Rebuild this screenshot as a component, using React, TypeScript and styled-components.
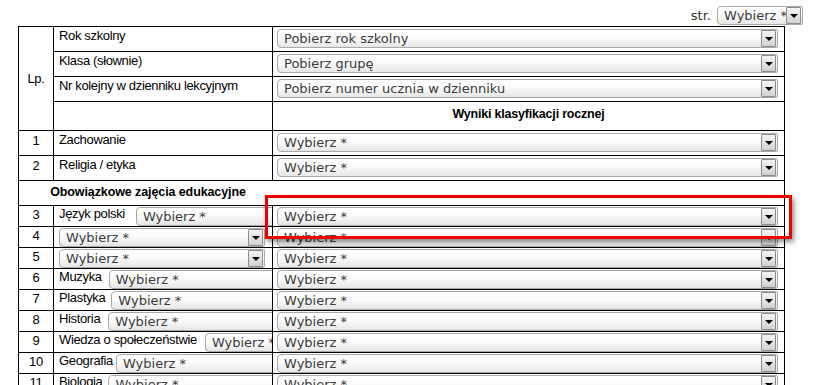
import React from 'react';
import styled, { createGlobalStyle } from 'styled-components';

const subjects = [
  { n: '3', label: 'Język polski', gap: 11 },
  { n: '4', label: '', gap: 0 },
  { n: '5', label: '', gap: 0 },
  { n: '6', label: 'Muzyka', gap: 7 },
  { n: '7', label: 'Plastyka', gap: 6 },
  { n: '8', label: 'Historia', gap: 8 },
  { n: '9', label: 'Wiedza o społeczeństwie', gap: 8 },
  { n: '10', label: 'Geografia', gap: 3 },
  { n: '11', label: 'Biologia', gap: 6 },
  { n: '12', label: 'Fizyka', gap: 6 },
  { n: '13', label: 'Chemia', gap: 6 },
];

function Dropdown({ text, width }: { text: string; width: number }) {
  return (
    <Select $w={width}>
      <SelectText>{text}</SelectText>
      <Arrow><Tri /></Arrow>
    </Select>
  );
}

export default function App() {
  return (<Page>
    <GlobalStyle/>
    <TopBar>
      <StrLabel>str.</StrLabel>
      <Dropdown text="Wybierz *" width={86}/>
    </TopBar>
    <Grid>
      <colgroup>
        <col style={{ width: 35 }}/>
        <col style={{ width: 219 }}/>
        <col style={{ width: 512 }}/>
      </colgroup>
      <tbody>
        <Row $h={25}>
          <NumCell rowSpan={4} $mid>Lp.</NumCell>
          <LabelCell>Rok szkolny</LabelCell>
          <SelCell><Dropdown text="Pobierz rok szkolny" width={501}/></SelCell>
        </Row>
        <Row $h={25}>
          <LabelCell>Klasa (słownie)</LabelCell>
          <SelCell><Dropdown text="Pobierz grupę" width={501}/></SelCell>
        </Row>
        <Row $h={25}>
          <LabelCell>Nr kolejny w dzienniku lekcyjnym</LabelCell>
          <SelCell><Dropdown text="Pobierz numer ucznia w dzienniku" width={501}/></SelCell>
        </Row>
        <Row $h={29}>
          <LabelCell/>
          <HeadCell>Wyniki klasyfikacji rocznej</HeadCell>
        </Row>
        <Row $h={25}>
          <NumCell>1</NumCell>
          <LabelCell>Zachowanie</LabelCell>
          <SelCell><Dropdown text="Wybierz *" width={501}/></SelCell>
        </Row>
        <Row $h={25}>
          <NumCell>2</NumCell>
          <LabelCell>Religia / etyka</LabelCell>
          <SelCell><Dropdown text="Wybierz *" width={501}/></SelCell>
        </Row>
        <Row $h={25}>
          <SectionCell colSpan={3}><SectionText>Obowiązkowe zajęcia edukacyjne</SectionText></SectionCell>
        </Row>
        {subjects.map(s => (
          <Row key={s.n} $h={20}>
            <NumCell $tight>{s.n}</NumCell>
            <SubjectCell>
              <SubjectLine>
                {s.label && <SubjectName>{s.label}</SubjectName>}
                <Offset $gap={s.gap}><Dropdown text="Wybierz *" width={206}/></Offset>
              </SubjectLine>
            </SubjectCell>
            <SelCell $tight><Dropdown text="Wybierz *" width={501}/></SelCell>
          </Row>
        ))}
      </tbody>
    </Grid>
    <Highlight/>
  </Page>);
}

const GlobalStyle = createGlobalStyle`
  html, body {
    margin: 0;
    padding: 0;
    overflow: hidden;
    background: #fff;
  }
`;
const Page = styled.div`
  position: relative;
  width: 821px;
  height: 385px;
  overflow: hidden;
  font-family: "Liberation Sans", Arial, sans-serif;
  color: #000;
`;
const TopBar = styled.div`
  height: 26px;
  box-sizing: border-box;
  padding: 6px 18px 0 0;
  display: flex;
  justify-content: flex-end;
  align-items: flex-start;
  gap: 6px;
`;
const StrLabel = styled.span`
  font: 13px/19px "DejaVu Sans", Verdana, sans-serif;
  color: #333;
`;
const Grid = styled.table`
  margin-left: 18px;
  width: 766px;
  table-layout: fixed;
  border-collapse: collapse;
  font-size: 13px;
`;
const Row = styled.tr<{ $h: number }>`
  height: ${({ $h }) => $h}px;
`;
const Cell = styled.td`
  border: 1px solid #000;
  padding: 0;
  vertical-align: top;
`;
const NumCell = styled(Cell)<{ $mid?: boolean; $tight?: boolean }>`
  text-align: center;
  vertical-align: ${({ $mid }) => $mid ? 'middle' : 'top'};
  padding-top: ${({ $mid, $tight }) => $mid ? 0 : $tight ? 1 : 2}px;
  line-height: 15px;
  letter-spacing: -0.3px;
`;
const LabelCell = styled(Cell)`
  padding: 1px 0 0 5px;
  white-space: nowrap;
  letter-spacing: -0.35px;
  line-height: 15px;
`;
const SelCell = styled(Cell)<{ $tight?: boolean }>`
  padding: ${({ $tight }) => $tight ? '1px 0 0 4px' : '2px 0 0 4px'};
`;
const HeadCell = styled(Cell)`
  text-align: center;
  font-weight: bold;
  font-size: 12.5px;
  padding-top: 5px;
  letter-spacing: -0.2px;
`;
const SectionCell = styled(Cell)`
  padding-top: 4px;
  font-weight: bold;
  font-size: 12.5px;
`;
const SectionText = styled.div`
  width: 258px;
  text-align: center;
  letter-spacing: -0.1px;
`;
const SubjectCell = styled(Cell)`
  overflow: hidden;
  padding: 0 0 0 5px;
`;
const SubjectLine = styled.div`
  display: flex;
  align-items: flex-start;
  white-space: nowrap;
`;
const SubjectName = styled.span`
  line-height: 16px;
  letter-spacing: -0.35px;
`;
const Offset = styled.div<{ $gap: number }>`
  margin-left: ${({ $gap }) => $gap}px;
  margin-top: 1px;
  flex-shrink: 0;
`;
const Select = styled.div<{ $w: number }>`
  position: relative;
  display: flex;
  align-items: center;
  width: ${({ $w }) => $w}px;
  height: 19px;
  box-sizing: border-box;
  border: 1px solid #a8a8a8;
  border-radius: 4px 2px 2px 4px;
  background: linear-gradient(#ffffff 0%, #fbfbfb 45%, #e6e6e6 100%);
  padding-left: 6px;
  overflow: hidden;
`;
const SelectText = styled.span`
  font: 13px/17px "DejaVu Sans", Verdana, sans-serif;
  color: #3a3a3a;
  white-space: nowrap;
`;
const Arrow = styled.span`
  position: absolute;
  right: 1px;
  top: 0;
  width: 15px;
  height: 17px;
  box-sizing: border-box;
  border: 1px solid #8c8c8c;
  border-radius: 1px;
  background: linear-gradient(#f4f4f4, #d2d2d2);
  display: flex;
  align-items: center;
  justify-content: center;
`;
const Tri = styled.span`
  width: 0;
  height: 0;
  border-left: 4px solid transparent;
  border-right: 4px solid transparent;
  border-top: 4px solid #000;
  margin-top: 1px;
`;
const Highlight = styled.div`
  position: absolute;
  left: 265px;
  top: 195px;
  width: 527px;
  height: 44px;
  box-sizing: border-box;
  border: 3px solid #ee0000;
  box-shadow: 2px 3px 5px rgba(0, 0, 0, 0.45);
  pointer-events: none;
`;
